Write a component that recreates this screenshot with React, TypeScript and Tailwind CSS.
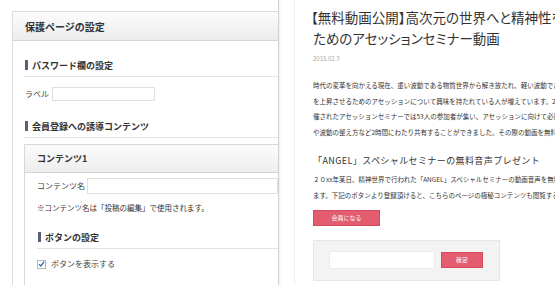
import React from 'react';

const jp = "font-['Noto_Sans_CJK_JP','Noto_Sans',sans-serif]";

const SectionHead = ({ title }: { title: string }) => (
  <div className="flex items-center gap-[4px] h-[14px] border-b border-[#e2e2e2] box-content pb-[4px]">
    <span className="w-[3px] h-[10px] bg-[#5c6074] ml-[1px]" />
    <span className="text-[9px] font-bold text-[#333] leading-none">{title}</span>
  </div>
);

const Para = ({ lines }: { lines: string[] }) => (
  <div className="text-[6.5px] leading-[15.6px] text-[#333]">
    {lines.map((l) => (
      <div key={l} className="whitespace-nowrap">{l}</div>
    ))}
  </div>
);

export default function App() {
  return (
    <div className={`w-[555px] h-[285px] overflow-hidden bg-white flex ${jp}`}>
      {/* admin screen */}
      <div className="w-[279px] shrink-0 h-full pl-[12px] pt-[11px] border-r border-[#d2d2d2] shadow-[1px_0_2px_rgba(0,0,0,0.08)] overflow-hidden">
        <div className="h-full border-l border-t border-[#dcdcdc]">
          <div className="h-[29px] flex items-center pl-[12px] bg-gradient-to-b from-[#fcfcfc] to-[#ececec] border-b border-[#d6d6d6]">
            <span className="text-[10px] font-bold text-[#333]">保護ページの設定</span>
          </div>
          <div className="pl-[11px]">
            <div className="pt-[17px]">
              <SectionHead title="パスワード欄の設定" />
            </div>
            <div className="mt-[10px] flex items-center gap-[3px] pl-[1px]">
              <span className="text-[8px] text-[#444]">ラベル</span>
              <div className="w-[103px] h-[14px] border border-[#e0e0e0] bg-white" />
            </div>
            <div className="pt-[18px]">
              <SectionHead title="会員登録への誘導コンテンツ" />
            </div>
            <div className="mt-[6px] border-l border-t border-[#d8d8d8] h-[200px]">
              <div className="h-[28px] flex items-center pl-[12px] bg-gradient-to-b from-[#fcfcfc] to-[#ededed] border-b border-[#d6d6d6]">
                <span className="text-[9px] font-bold text-[#333]">コンテンツ1</span>
              </div>
              <div className="pl-[12px]">
                <div className="mt-[5px] flex items-center gap-[2px]">
                  <span className="text-[8px] text-[#444]">コンテンツ名</span>
                  <div className="flex-1 h-[16px] border border-[#e0e0e0] bg-white" />
                </div>
                <div className="mt-[8px] text-[7.5px] text-[#333] leading-[12px] whitespace-nowrap">
                  ※コンテンツ名は「投稿の編集」で使用されます。
                </div>
                <div className="pt-[16px]">
                  <SectionHead title="ボタンの設定" />
                </div>
                <div className="mt-[9px] flex items-center gap-[5px]">
                  <span className="w-[9px] h-[9px] border border-[#b5b5b5] bg-white flex items-center justify-center">
                    <svg width="8" height="8" viewBox="0 0 8 8">
                      <path d="M1.2 4.2 L3.2 6.2 L7 1.4" stroke="#2b6fb5" strokeWidth="1.5" fill="none" />
                    </svg>
                  </span>
                  <span className="text-[8px] text-[#444]">ボタンを表示する</span>
                </div>
              </div>
            </div>
          </div>
        </div>
      </div>

      {/* front page */}
      <div className="ml-[15px] flex-1 h-full border-l border-[#efefef] pl-[18px] pt-[7px] overflow-hidden">
        <h1 className="text-[13.5px] leading-[21px] font-normal text-[#333] [font-feature-settings:'palt'] whitespace-nowrap">
          <div className="-ml-[2px]">【無料動画公開】高次元の世界へと精神性を高める</div>
          <div>ためのアセッションセミナー動画</div>
        </h1>
        <div className="mt-[7px] text-[6px] leading-none text-[#aaa]">2015.02.3</div>
        <div className="mt-[16px]">
          <Para
            lines={[
              '時代の変革を向かえる現在、重い波動である物質世界から解き放たれ、軽い波動である',
              'を上昇させるためのアセッションについて興味を持たれている人が増えています。2015年',
              '催されたアセッションセミナーでは53人の参加者が集い、アセッションに向けて必要な',
              'や波動の整え方など2時間にわたり共有することができました。その際の動画を無料で公開',
            ]}
          />
        </div>
        <div className="mt-[14px] text-[9px] leading-[14px] text-[#333] tracking-[0.4px] whitespace-nowrap">
          「ANGEL」スペシャルセミナーの無料音声プレゼント
        </div>
        <div className="mt-[4px]">
          <Para
            lines={[
              '２０xx年某日、精神世界で行われた「ANGEL」スペシャルセミナーの動画音声を無料で',
              'ます。下記のボタンより登録頂けると、こちらのページの極秘コンテンツも閲覧することが',
            ]}
          />
        </div>
        <div className="mt-[6px] w-[67px] h-[16px] bg-[#e35c6f] border border-[#d44b5e] flex items-center justify-center">
          <span className="text-[6px] text-white leading-none">会員になる</span>
        </div>
        <div className="mt-[14px] w-[187px] h-[41px] bg-[#f3f3f3] border border-[#e6e6e6] flex items-center pl-[15px] gap-[6px]">
          <div className="w-[106px] h-[18px] bg-white border border-[#ebebeb]" />
          <div className="w-[42px] h-[16px] bg-[#e35c6f] border border-[#d44b5e] flex items-center justify-center">
            <span className="text-[6px] text-white leading-none">確定</span>
          </div>
        </div>
      </div>
    </div>
  );
}
